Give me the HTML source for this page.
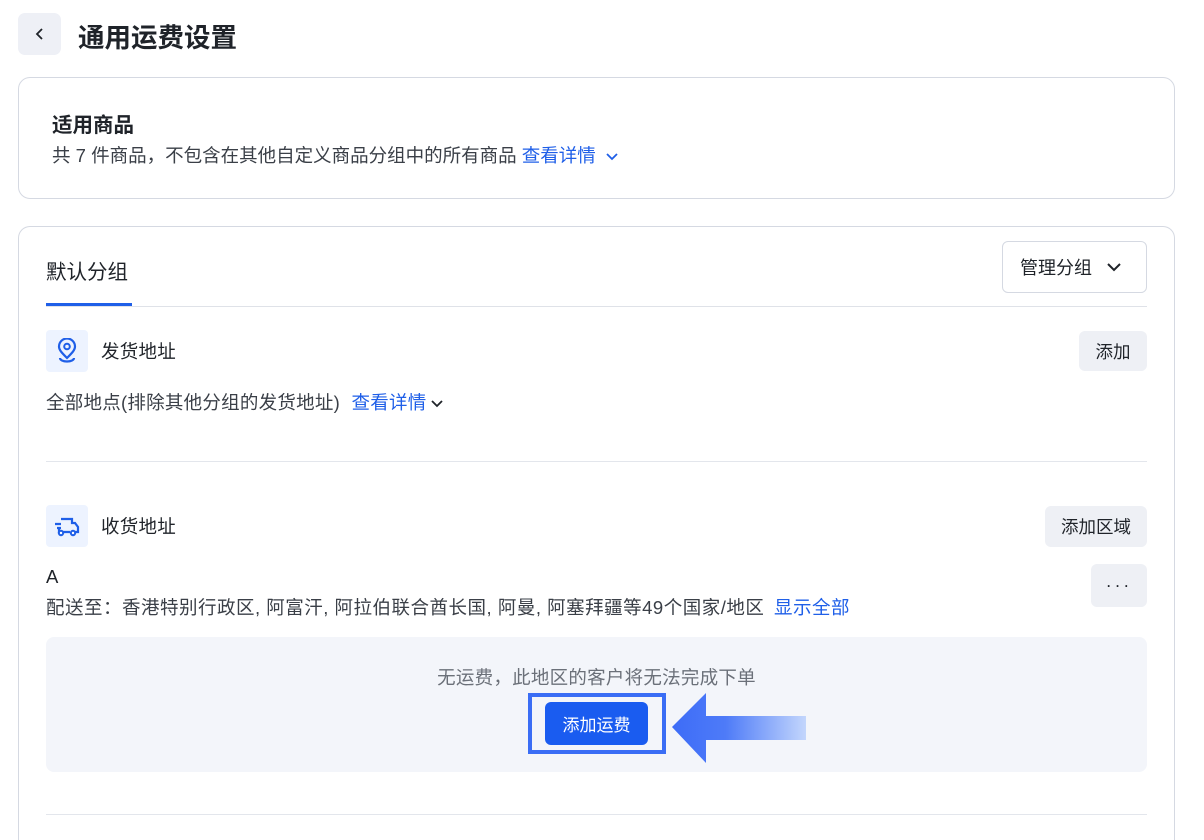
<!DOCTYPE html>
<html><head><meta charset="utf-8"><style>
*{box-sizing:border-box;margin:0;padding:0}
html,body{width:1204px;height:840px;overflow:hidden}
body{background:#fff;font-family:"Liberation Sans","Noto Sans CJK SC",sans-serif;color:#1f2329;position:relative}
.abs{position:absolute;white-space:nowrap}
.card{position:absolute;border:1px solid #d5d9e2;border-radius:12px;background:#fff}
.btn{position:absolute;background:#eef0f5;border-radius:6px;font-size:17.5px;display:flex;align-items:center;justify-content:center;color:#1f2329}
.link{color:#1f5fe8}
.ico{position:absolute;width:42px;height:42px;background:#edf3ff;border-radius:4px;display:flex;align-items:center;justify-content:center}
.t{font-size:18.5px;line-height:22px;letter-spacing:0.25px}
</style></head><body>
<div class="abs" style="left:18px;top:13px;width:43px;height:42px;background:#eef0f6;border-radius:7px;display:flex;align-items:center;justify-content:center">
<svg width="14" height="14" viewBox="0 0 14 14"><path d="M9 2L4 7l5 5" stroke="#1f2329" stroke-width="1.8" fill="none"/></svg></div>
<div class="abs" style="left:78px;top:16px;font-size:26.5px;font-weight:600">通用运费设置</div>

<div class="card" style="left:18px;top:77px;width:1157px;height:122px"></div>
<div class="abs" style="left:52px;top:108px;font-size:20.5px;font-weight:600">适用商品</div>
<div class="abs t" style="left:52px;top:145px;color:#3a3f47;letter-spacing:0">共 7 件商品，不包含在其他自定义商品分组中的所有商品 <span class="link">查看详情</span> <svg width="14" height="10" viewBox="0 0 14 10" style="margin-left:4px"><path d="M2 2l5 5 5-5" stroke="#1f5fe8" stroke-width="1.8" fill="none"/></svg></div>

<div class="card" style="left:18px;top:226px;width:1157px;height:640px;border-bottom:none;border-radius:12px 12px 0 0"></div>
<div class="abs" style="left:46px;top:255px;font-size:20.5px">默认分组</div>
<div class="abs" style="left:46px;top:303px;width:86px;height:4px;background:#1f5fe8"></div>
<div class="abs" style="left:46px;top:306px;width:1101px;height:1px;background:#dfe2e8"></div>
<div class="abs" style="left:1002px;top:241px;width:145px;height:52px;border:1px solid #d5d9e2;border-radius:6px;font-size:18px;display:flex;align-items:center;padding-left:17px">管理分组<svg width="16" height="10" viewBox="0 0 16 10" style="margin-left:14px"><path d="M2 2l6 6 6-6" stroke="#1f2329" stroke-width="2" fill="none"/></svg></div>

<div class="ico" style="left:46px;top:330px"><svg width="22" height="26" viewBox="0 0 22 26"><path d="M11 20C6 15 3 12 3 8.5a8 8 0 0116 0C19 12 16 15 11 20z" stroke="#1f5fe8" stroke-width="2.2" fill="none"/><circle cx="11" cy="8.5" r="2.8" stroke="#1f5fe8" stroke-width="2" fill="none"/><path d="M4 20c0 2 3 3.5 7 3.5s7-1.5 7-3.5" stroke="#1f5fe8" stroke-width="2.2" fill="none"/></svg></div>
<div class="abs t" style="left:101px;top:341px">发货地址</div>
<div class="btn" style="left:1079px;top:331px;width:68px;height:40px">添加</div>
<div class="abs t" style="left:46px;top:392px;color:#3a3f47">全部地点(排除其他分组的发货地址) <span class="link" style="margin-left:6px">查看详情</span><svg width="14" height="10" viewBox="0 0 14 10" style="margin-left:4px"><path d="M2 2l5 5 5-5" stroke="#1f2329" stroke-width="1.8" fill="none"/></svg></div>
<div class="abs" style="left:46px;top:461px;width:1101px;height:1px;background:#e3e6ec"></div>

<div class="ico" style="left:46px;top:505px"><svg width="26" height="22" viewBox="0 0 26 22"><path d="M7 4h11v4h3l3 4v5h-3M9 17h7M7 17H5v-5" stroke="#1f5fe8" stroke-width="2.2" fill="none"/><path d="M1 9h6M3 13h4" stroke="#1f5fe8" stroke-width="2.2"/><circle cx="7" cy="18" r="2.2" stroke="#1f5fe8" stroke-width="2" fill="#fff"/><circle cx="19" cy="18" r="2.2" stroke="#1f5fe8" stroke-width="2" fill="#fff"/></svg></div>
<div class="abs t" style="left:101px;top:516px">收货地址</div>
<div class="btn" style="left:1045px;top:506px;width:102px;height:41px">添加区域</div>
<div class="abs t" style="left:46px;top:566px">A</div>
<div class="btn" style="left:1091px;top:564px;width:56px;height:43px;letter-spacing:3px">···</div>
<div class="abs t" style="left:46px;top:597px;color:#3a3f47;letter-spacing:0.5px">配送至：香港特别行政区, 阿富汗, 阿拉伯联合酋长国, 阿曼, 阿塞拜疆等49个国家/地区 <span class="link" style="margin-left:4px">显示全部</span></div>

<div class="abs" style="left:46px;top:637px;width:1101px;height:135px;background:#f3f5fa;border-radius:8px"></div>
<div class="abs t" style="left:0;width:1193px;top:667px;text-align:center;color:#6b7079">无运费，此地区的客户将无法完成下单</div>
<div class="abs" style="left:528px;top:693px;width:138px;height:61px;border:4px solid #3a6df5"></div>
<div class="abs" style="left:545px;top:702px;width:103px;height:43px;background:#1a5cf0;border-radius:6px;color:#fff;font-size:17px;display:flex;align-items:center;justify-content:center">添加运费</div>
<svg class="abs" style="left:670px;top:692px" width="140" height="72" viewBox="0 0 140 72"><defs><linearGradient id="g" x1="0" x2="1"><stop offset="0" stop-color="#3d6cf7"/><stop offset="0.4" stop-color="#4e7bf8"/><stop offset="1" stop-color="#c3d6fc"/></linearGradient></defs><path d="M2 35L36 1v23h100v24H36v23z" fill="url(#g)"/></svg>
<div class="abs" style="left:46px;top:814px;width:1101px;height:1px;background:#e3e6ec"></div>
</body></html>
